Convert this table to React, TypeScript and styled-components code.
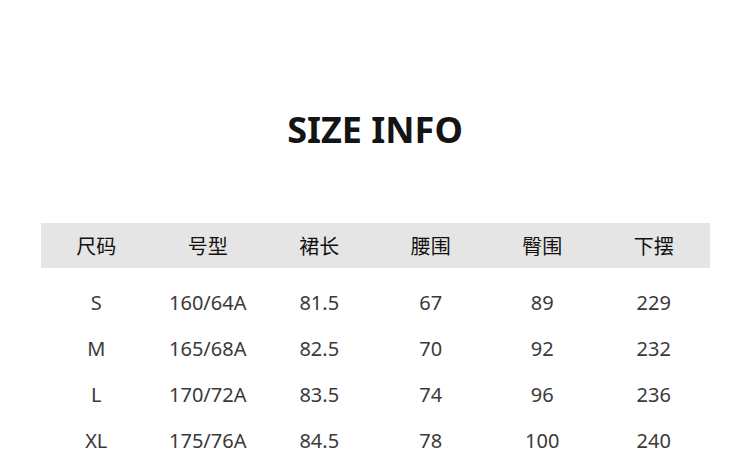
import React from "react";
import styled, { createGlobalStyle } from "styled-components";

const Global = createGlobalStyle`
  html, body { margin: 0; padding: 0; background: #fff; }
  body { font-family: "Noto Sans", "Noto Sans CJK SC", sans-serif; }
`;

const Page = styled.div`
  width: 750px;
  height: 464px;
  overflow: hidden;
  display: flex;
  flex-direction: column;
  align-items: center;
`;

const Title = styled.h1`
  margin: 104px 0 0;
  height: 52px;
  font-family: "Noto Sans", sans-serif;
  font-weight: 700;
  font-size: 36px;
  line-height: 52px;
  color: #141414;
`;

const Table = styled.div`
  margin-top: 67px;
  width: 669px;
  display: flex;
  flex-direction: column;
`;

const HeadRow = styled.div`
  display: grid;
  grid-template-columns: repeat(6, 1fr);
  height: 45px;
  align-items: center;
  background: #e5e5e5;
  margin-bottom: 12px;
`;

const HeadCell = styled.div`
  text-align: center;
  font-family: "Noto Sans CJK SC", sans-serif;
  font-size: 20px;
  line-height: 28px;
  color: #111;
`;

const Row = styled.div`
  display: grid;
  grid-template-columns: repeat(6, 1fr);
  height: 46px;
  align-items: center;
`;

const Cell = styled.div`
  text-align: center;
  font-family: "Noto Sans", sans-serif;
  font-size: 20px;
  line-height: 28px;
  color: #3a3a3a;
`;

const headers = ["尺码", "号型", "裙长", "腰围", "臀围", "下摆"];
const rows = [
  ["S", "160/64A", "81.5", "67", "89", "229"],
  ["M", "165/68A", "82.5", "70", "92", "232"],
  ["L", "170/72A", "83.5", "74", "96", "236"],
  ["XL", "175/76A", "84.5", "78", "100", "240"],
];

export default function App() {
  return (
    <Page>
      <Global />
      <Title>SIZE INFO</Title>
      <Table>
        <HeadRow>
          {headers.map((h) => (
            <HeadCell key={h}>{h}</HeadCell>
          ))}
        </HeadRow>
        {rows.map((r) => (
          <Row key={r[0]}>
            {r.map((c, i) => (
              <Cell key={i}>{c}</Cell>
            ))}
          </Row>
        ))}
      </Table>
    </Page>
  );
}
